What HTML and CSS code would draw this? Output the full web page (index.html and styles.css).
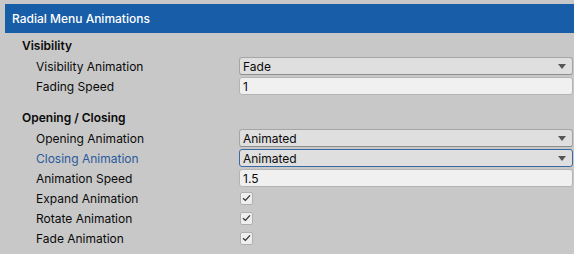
FILE: index.html
```html
<!DOCTYPE html>
<html>
<head>
<meta charset="utf-8">
<link rel="stylesheet" href="styles.css">
</head>
<body>
<div class="header">Radial Menu Animations</div>
<div class="section first">
  <div class="heading">Visibility</div>
  <div class="row">
    <div class="label">Visibility Animation</div>
    <div class="dropdown"><span>Fade</span><span class="arrow"></span></div>
  </div>
  <div class="row">
    <div class="label">Fading Speed</div>
    <div class="field">1</div>
  </div>
</div>
<div class="section second">
  <div class="heading">Opening / Closing</div>
  <div class="row">
    <div class="label">Opening Animation</div>
    <div class="dropdown"><span>Animated</span><span class="arrow"></span></div>
  </div>
  <div class="row">
    <div class="label focused">Closing Animation</div>
    <div class="dropdown focus"><span>Animated</span><span class="arrow"></span></div>
  </div>
  <div class="row">
    <div class="label">Animation Speed</div>
    <div class="field">1.5</div>
  </div>
  <div class="row">
    <div class="label">Expand Animation</div>
    <div class="check"><svg width="9" height="8" viewBox="0 0 9 8"><path d="M1 4.2 L3.4 6.4 L8 1.4" fill="none" stroke="#333" stroke-width="1.3"/></svg></div>
  </div>
  <div class="row">
    <div class="label">Rotate Animation</div>
    <div class="check"><svg width="9" height="8" viewBox="0 0 9 8"><path d="M1 4.2 L3.4 6.4 L8 1.4" fill="none" stroke="#333" stroke-width="1.3"/></svg></div>
  </div>
  <div class="row">
    <div class="label">Fade Animation</div>
    <div class="check"><svg width="9" height="8" viewBox="0 0 9 8"><path d="M1 4.2 L3.4 6.4 L8 1.4" fill="none" stroke="#333" stroke-width="1.3"/></svg></div>
  </div>
</div>
</body>
</html>
```

FILE: styles.css
```css
html, body {
  margin: 0;
  padding: 0;
  background: #c8c8c8;
  font-family: Inter, "Noto Sans", sans-serif;
  font-size: 12px;
  color: #0a0a0a;
}
.header {
  margin: 4px 0 0 5px;
  height: 29px;
  background: #175da8;
  color: #ffffff;
  font-weight: 500;
  font-size: 12px;
  display: flex;
  align-items: center;
  padding-left: 7px;
}
.section.first {
  padding-top: 3px;
}
.section.second {
  padding-top: 12px;
}
.heading {
  height: 20px;
  line-height: 20px;
  padding-left: 22px;
  font-weight: 600;
}
.row {
  height: 20px;
  display: flex;
  align-items: center;
}
.label {
  width: 203px;
  padding-left: 36px;
  flex: none;
}
.label.focused {
  color: #2a5a9c;
}
.dropdown, .field {
  box-sizing: border-box;
  height: 18px;
  width: 334px;
  border-radius: 3px;
  display: flex;
  align-items: center;
  padding-left: 3px;
}
.dropdown {
  background: #dfdfdf;
  border: 1px solid #a5a5a5;
  border-bottom-color: #8e8e8e;
  justify-content: space-between;
  padding-right: 6px;
}
.dropdown.focus {
  border: 1px solid #3a6aa4;
}
.field {
  background: #f0f0f0;
  border: 1px solid #b4b4b4;
}
.arrow {
  width: 0;
  height: 0;
  border-left: 4px solid transparent;
  border-right: 4px solid transparent;
  border-top: 5px solid #555555;
}
.check {
  box-sizing: border-box;
  width: 13px;
  height: 13px;
  margin-left: 1px;
  background: #eeeeee;
  border: 1px solid #b0b0b0;
  border-radius: 2px;
  display: flex;
  align-items: center;
  justify-content: center;
}
.check svg {
  display: block;
}
```
